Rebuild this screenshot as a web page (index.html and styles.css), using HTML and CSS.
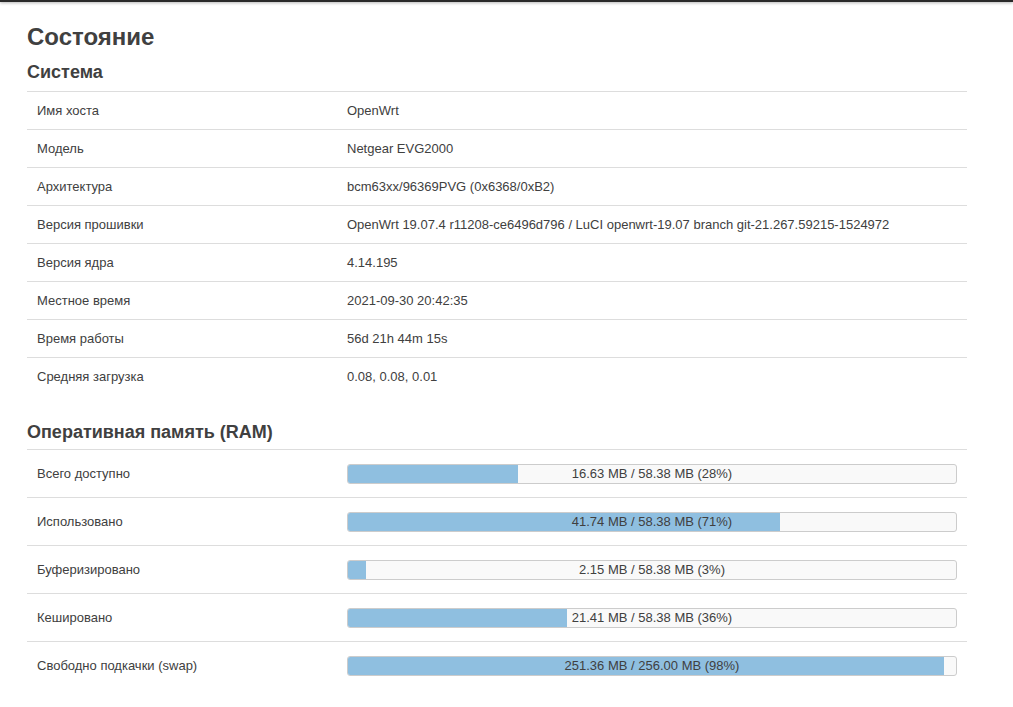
FILE: index.html
```html
<!DOCTYPE html>
<html lang="ru">
<head>
<meta charset="utf-8">
<title>Состояние</title>
<link rel="stylesheet" href="styles.css">
</head>
<body>
<div class="topbar"></div>
<main class="page">
  <h2 class="title">Состояние</h2>
  <h3 class="section">Система</h3>
  <div class="table sys">
    <div class="row"><div class="label">Имя хоста</div><div class="value">OpenWrt</div></div>
    <div class="row"><div class="label">Модель</div><div class="value">Netgear EVG2000</div></div>
    <div class="row"><div class="label">Архитектура</div><div class="value">bcm63xx/96369PVG (0x6368/0xB2)</div></div>
    <div class="row"><div class="label">Версия прошивки</div><div class="value">OpenWrt 19.07.4 r11208-ce6496d796 / LuCI openwrt-19.07 branch git-21.267.59215-1524972</div></div>
    <div class="row"><div class="label">Версия ядра</div><div class="value">4.14.195</div></div>
    <div class="row"><div class="label">Местное время</div><div class="value">2021-09-30 20:42:35</div></div>
    <div class="row"><div class="label">Время работы</div><div class="value">56d 21h 44m 15s</div></div>
    <div class="row"><div class="label">Средняя загрузка</div><div class="value">0.08, 0.08, 0.01</div></div>
  </div>
  <h3 class="section ram-title">Оперативная память (RAM)</h3>
  <div class="table ram">
    <div class="row"><div class="label">Всего доступно</div><div class="value"><div class="bar"><div class="fill" style="width:28%"></div><span class="bar-text">16.63 MB / 58.38 MB (28%)</span></div></div></div>
    <div class="row"><div class="label">Использовано</div><div class="value"><div class="bar"><div class="fill" style="width:71%"></div><span class="bar-text">41.74 MB / 58.38 MB (71%)</span></div></div></div>
    <div class="row"><div class="label">Буферизировано</div><div class="value"><div class="bar"><div class="fill" style="width:3%"></div><span class="bar-text">2.15 MB / 58.38 MB (3%)</span></div></div></div>
    <div class="row"><div class="label">Кешировано</div><div class="value"><div class="bar"><div class="fill" style="width:36%"></div><span class="bar-text">21.41 MB / 58.38 MB (36%)</span></div></div></div>
    <div class="row"><div class="label">Свободно подкачки (swap)</div><div class="value"><div class="bar"><div class="fill" style="width:98%"></div><span class="bar-text">251.36 MB / 256.00 MB (98%)</span></div></div></div>
  </div>
</main>
</body>
</html>
```

FILE: styles.css
```css
html, body {
  margin: 0;
  padding: 0;
  background: #fff;
}
body {
  font-family: "Liberation Sans", Arial, sans-serif;
  color: #404040;
  font-size: 13px;
}
.topbar {
  height: 2px;
  background: #2a2a2a;
  box-shadow: 0 1px 3px rgba(0, 0, 0, 0.35);
}
.page {
  width: 940px;
  padding-left: 27px;
}
.title {
  margin: 20px 0 0 0;
  font-size: 24px;
  line-height: 30px;
  font-weight: bold;
  color: #404040;
}
.section {
  margin: 8px 0 7px 0;
  font-size: 18px;
  line-height: 24px;
  font-weight: bold;
  color: #404040;
}
.ram-title {
  margin: 25px 0 5px 0;
}
.row {
  display: grid;
  grid-template-columns: 320px 1fr;
  align-items: center;
  border-top: 1px solid #ddd;
  box-sizing: border-box;
}
.sys .row {
  height: 38px;
}
.ram .row {
  height: 48px;
}
.label {
  padding-left: 10px;
}
.value {
  padding-right: 10px;
}
.bar {
  position: relative;
  height: 20px;
  box-sizing: border-box;
  border: 1px solid #ccc;
  border-radius: 3px;
  background: #f9f9f9;
  overflow: hidden;
  display: flex;
  align-items: center;
  justify-content: center;
}
.fill {
  position: absolute;
  left: 0;
  top: 0;
  bottom: 0;
  background: #8fbfe0;
}
.bar-text {
  position: relative;
  font-size: 13px;
  line-height: 18px;
  color: #404040;
  white-space: nowrap;
}
```
